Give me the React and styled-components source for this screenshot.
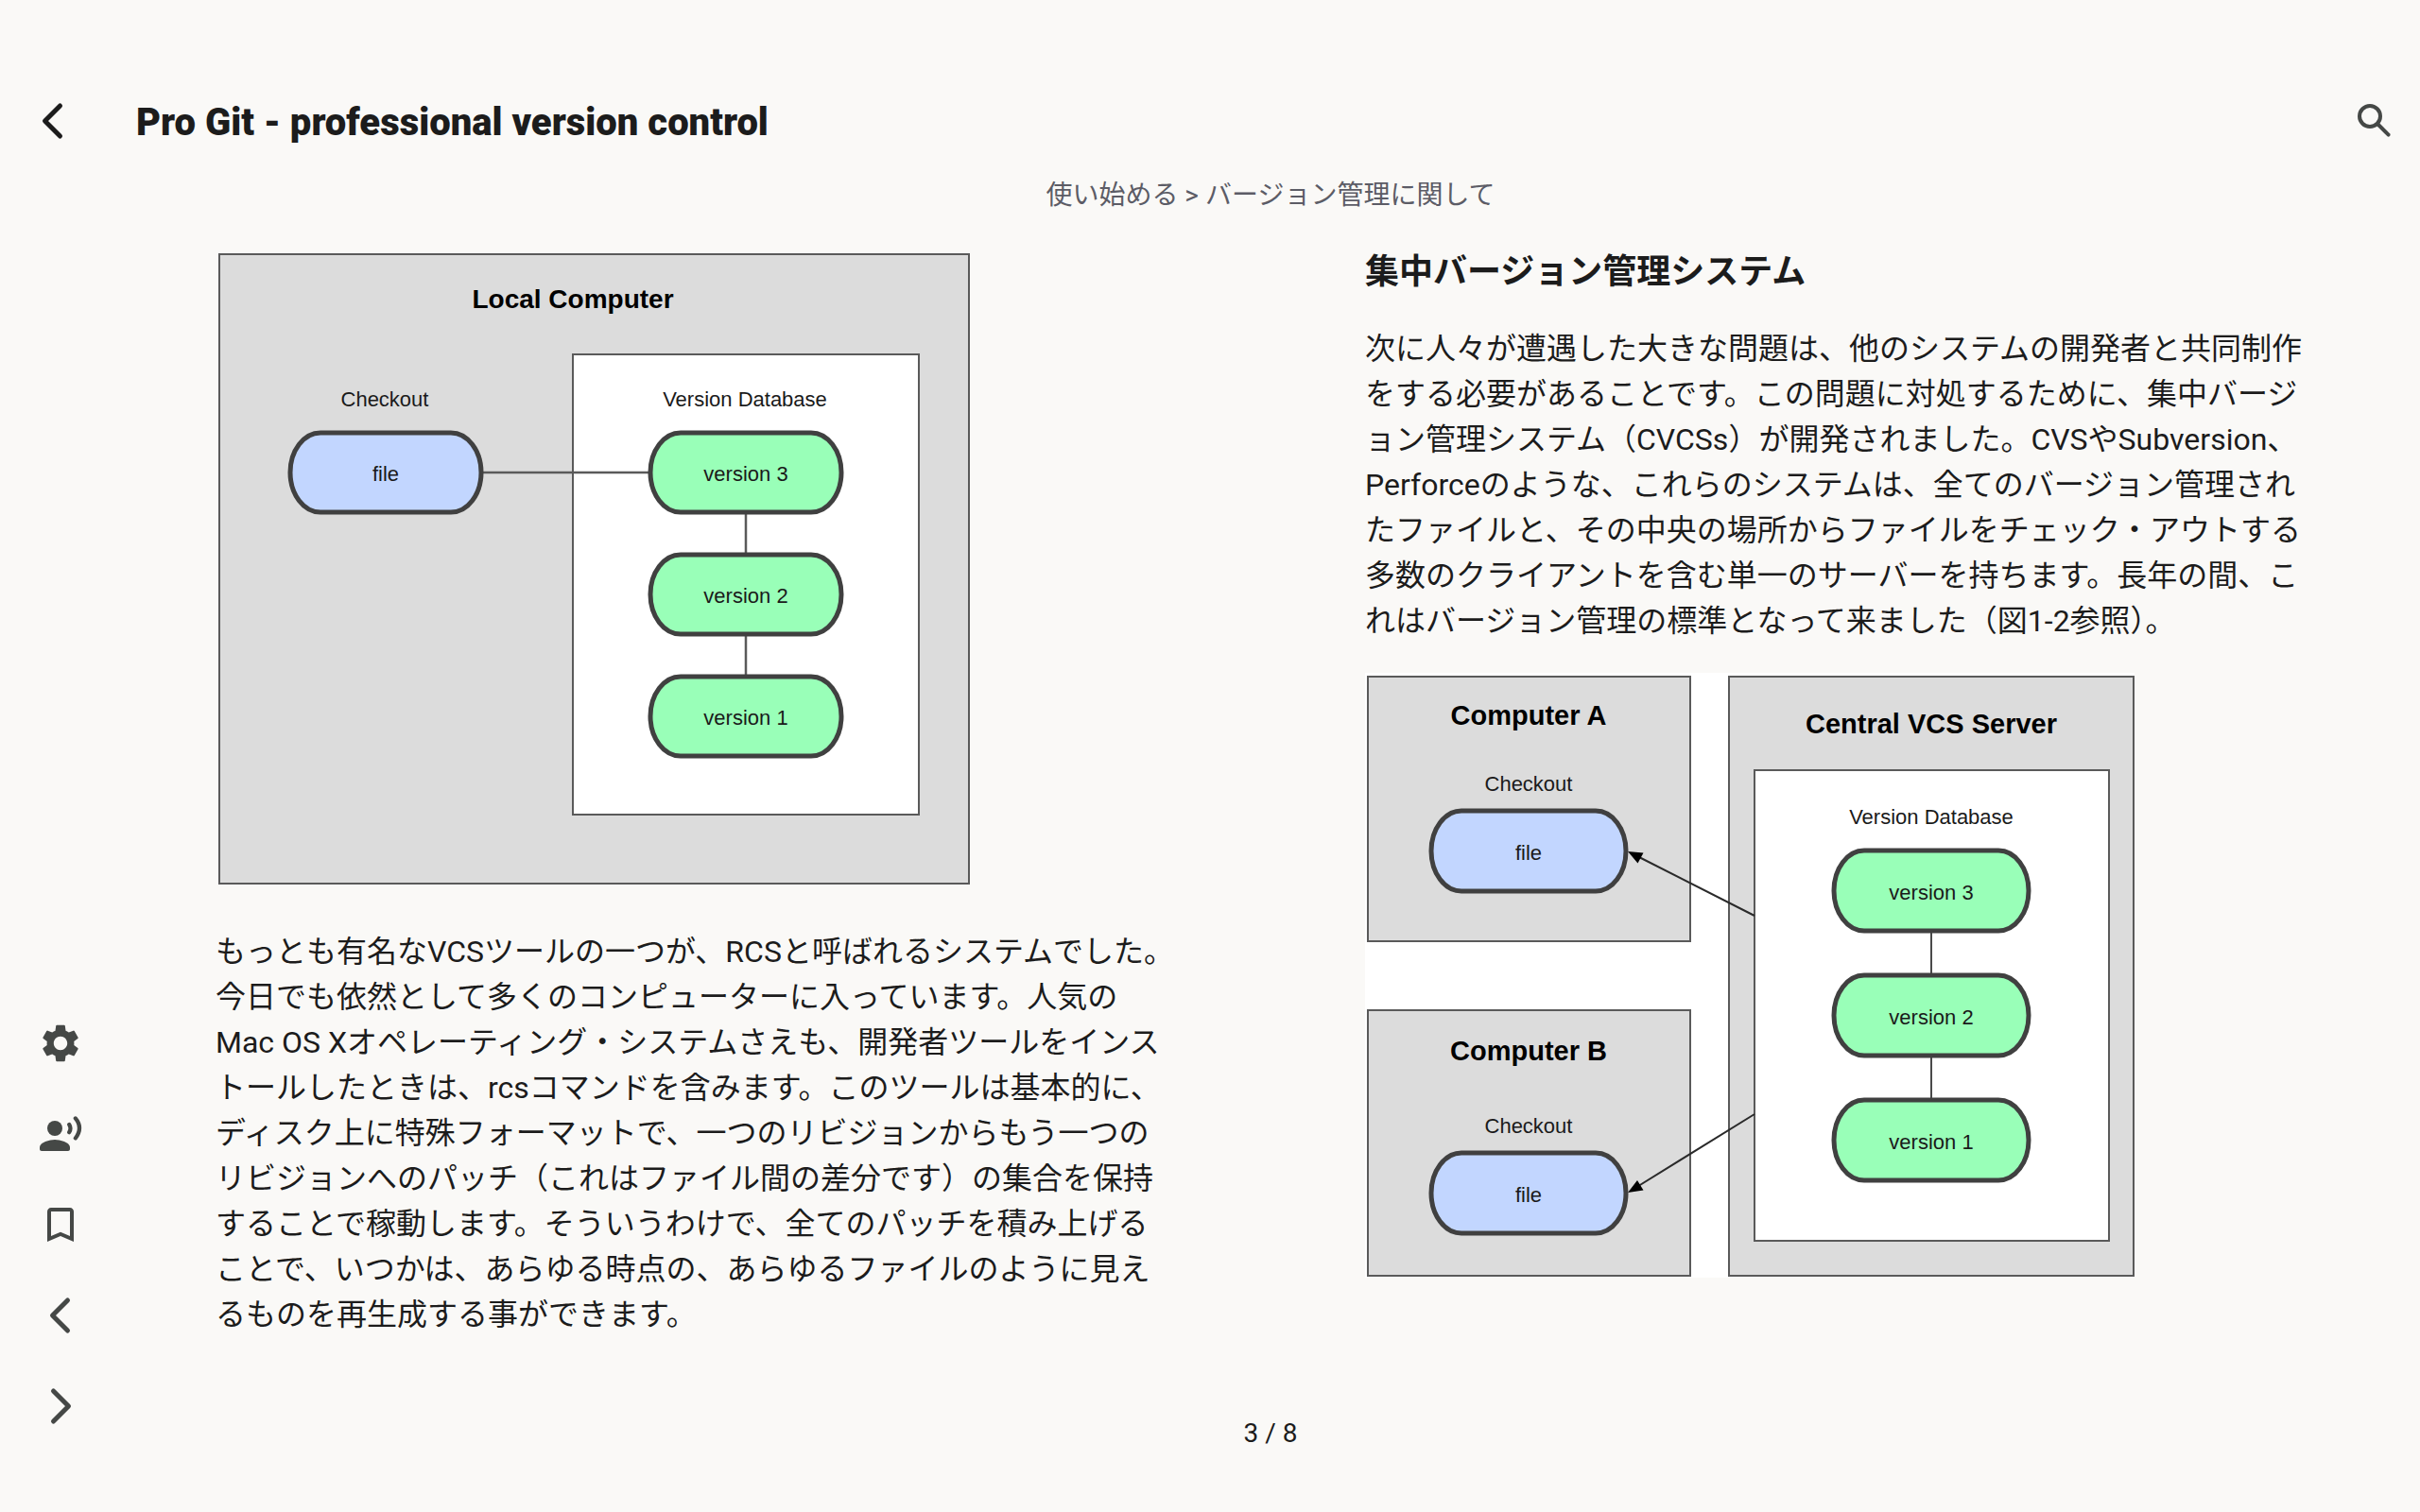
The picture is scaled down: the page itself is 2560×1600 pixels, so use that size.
import React from "react";
import styled, { createGlobalStyle } from "styled-components";
import { MdSettings, MdBookmarkBorder } from "react-icons/md";

const GlobalStyle = createGlobalStyle`
  *, *::before, *::after { box-sizing: border-box; }
  body {
    margin: 0;
    background: #faf9f7;
    color: #1c1c1c;
    font-family: Roboto, "Noto Sans CJK JP", sans-serif;
  }
`;

const Page = styled.div`
  min-height: 100vh;
  display: flex;
  flex-direction: column;
`;

const Header = styled.header`
  display: flex;
  align-items: center;
  gap: 40px;
  height: 96px;
  margin-top: 80px;
  padding: 0 16px 0 8px;
`;

const Title = styled.h1`
  flex: 1;
  margin: 0;
  padding-top: 4px;
  font-size: 40px;
  line-height: 48px;
  font-weight: 900;
`;

const IconButton = styled.button`
  display: flex;
  align-items: center;
  justify-content: center;
  width: ${(p) => (p.$compact ? 64 : 96)}px;
  height: 96px;
  padding: 0;
  border: 0;
  background: none;
  color: ${(p) => (p.$strong ? "#1c1c1c" : "#454846")};
  cursor: pointer;

  svg { width: 48px; height: 48px; display: block; }
`;

const Body = styled.div`
  flex: 1;
  display: flex;
`;

const SideBar = styled.nav`
  flex: 0 0 128px;
  display: flex;
  flex-direction: column;
  justify-content: flex-end;
  align-items: center;
  padding-bottom: 64px;
`;

const Reader = styled.main`
  flex: 1;
  min-width: 0;
  display: flex;
  flex-direction: column;
`;

const Crumb = styled.div`
  height: 90px;
  padding-top: 10px;
  text-align: center;
  font-size: 28px;
  line-height: 42px;
  color: #5c5c66;
`;

const Spread = styled.div`
  flex: 1;
  display: grid;
  grid-template-columns: 1fr 1fr;
`;

const Leaf = styled.article`
  padding: 0 100px;
`;

const Heading = styled.h2`
  margin: 0 0 35px;
  font-size: 36px;
  line-height: 44px;
  font-weight: 700;
`;

const Text = styled.p`
  margin: 0;
  font-size: 32px;
  line-height: 48px;
`;

const Figure = styled.figure`
  margin: ${(p) => (p.$spaced ? "31px 0 0" : "0 0 45px")};

  svg { display: block; max-width: 100%; }
  text {
    font-family: "Liberation Sans", Arial, sans-serif;
    font-size: 22px;
    text-anchor: middle;
    fill: #1a1a1a;
  }
`;

const Footer = styled.footer`
  height: 103px;
  text-align: center;
  font-size: 28px;
  line-height: 40px;
`;

const DiagramTitle = styled.text`
  && { font-size: ${(p) => p.$size}px; font-weight: 700; fill: #000; }
`;

function Chevron({ right }) {
  return (
    <svg viewBox="0 0 48 48" fill="none" stroke="currentColor" strokeWidth="5" strokeLinecap="round" strokeLinejoin="round" aria-hidden="true">
      <path d={right ? "M16.5 8 32.5 24 16.5 40" : "M31.5 8 15.5 24 31.5 40"} />
    </svg>
  );
}

function SearchIcon() {
  return (
    <svg viewBox="0 0 48 48" fill="none" stroke="currentColor" strokeWidth="4" aria-hidden="true">
      <circle cx="19" cy="19" r="11" />
      <path d="M27.5 27.5 38.6 38.6" strokeLinecap="round" />
    </svg>
  );
}

function VoiceIcon() {
  return (
    <svg viewBox="0 0 24 24" fill="currentColor" aria-hidden="true">
      <circle cx="9" cy="9" r="4" />
      <path d="M9 15c-2.67 0-8 1.34-8 4v1c0 .55.45 1 1 1h14c.55 0 1-.45 1-1v-1c0-2.66-5.33-4-8-4z" />
      <path d="M16.6 7q1.3 2 0 4.1M19.9 3.7q4.2 5 0 10.5" fill="none" stroke="currentColor" strokeWidth="2.1" strokeLinecap="round" />
    </svg>
  );
}

function Panel({ x, y, w, h, fill = "#dcdcdc" }) {
  return <rect x={x} y={y} width={w} height={h} fill={fill} stroke="#5a5a5a" strokeWidth="2" />;
}

function Pill({ x, y, w, h, fill, children }) {
  return (
    <g>
      <rect x={x} y={y} width={w} height={h} rx="32" ry={h / 2} fill={fill} stroke="#404040" strokeWidth="5" />
      <text x={x + w / 2} y={y + h / 2 + 9}>{children}</text>
    </g>
  );
}

const BLUE = "#c2d6ff";
const GREEN = "#99ffb8";

function LocalDiagram() {
  return (
    <svg width="800" height="672" viewBox="228 266 800 672" role="img" aria-label="Local Computer">
      <Panel x={232} y={269} w={793} h={666} />
      <Panel x={606} y={375} w={366} h={487} fill="#fff" />
      <path d="M508 500H689M789 542V588M789 670V717" stroke="#5a5a5a" strokeWidth="2.5" />
      <DiagramTitle $size={28} x="606" y="326">Local Computer</DiagramTitle>
      <text x="407" y="430">Checkout</text>
      <text x="788" y="430">Version Database</text>
      <Pill x={307} y={458} w={202} h={84} fill={BLUE}>file</Pill>
      <Pill x={688} y={458} w={202} h={84} fill={GREEN}>version 3</Pill>
      <Pill x={688} y={587} w={202} h={84} fill={GREEN}>version 2</Pill>
      <Pill x={688} y={716} w={202} h={84} fill={GREEN}>version 1</Pill>
    </svg>
  );
}

function CentralDiagram() {
  return (
    <svg width="814" height="640" viewBox="1444 712 814 640" role="img" aria-label="Central VCS Server">
      <rect x="1444" y="712" width="814" height="640" fill="#fff" />
      <Panel x={1447} y={716} w={341} h={280} />
      <Panel x={1447} y={1069} w={341} h={281} />
      <Panel x={1829} y={716} w={428} h={634} />
      <Panel x={1856} y={815} w={375} h={498} fill="#fff" />
      <path d="M2043 985V1031M2043 1117V1163" stroke="#4a4a4a" strokeWidth="2" />
      <path d="M1856 969 1730 905M1856 1179 1730 1257" stroke="#2a2a2a" strokeWidth="2" />
      <path d="M1722 901 1738.5 902.5 1732.5 913.5ZM1722 1262 1732 1249 1738.5 1259.5Z" fill="#000" />
      <DiagramTitle $size={29} x="1617" y="767">Computer A</DiagramTitle>
      <DiagramTitle $size={29} x="1617" y="1122">Computer B</DiagramTitle>
      <DiagramTitle $size={29} x="2043" y="776">Central VCS Server</DiagramTitle>
      <text x="1617" y="837">Checkout</text>
      <text x="1617" y="1199">Checkout</text>
      <text x="2043" y="872">Version Database</text>
      <Pill x={1514} y={858} w={206} h={85} fill={BLUE}>file</Pill>
      <Pill x={1514} y={1220} w={206} h={85} fill={BLUE}>file</Pill>
      <Pill x={1940} y={900} w={206} h={85} fill={GREEN}>version 3</Pill>
      <Pill x={1940} y={1032} w={206} h={85} fill={GREEN}>version 2</Pill>
      <Pill x={1940} y={1164} w={206} h={85} fill={GREEN}>version 1</Pill>
    </svg>
  );
}

export default function App() {
  return (
    <Page lang="ja">
      <GlobalStyle />
      <Header>
        <IconButton $strong aria-label="Back"><Chevron /></IconButton>
        <Title>Pro Git - professional version control</Title>
        <IconButton $compact aria-label="Search"><SearchIcon /></IconButton>
      </Header>
      <Body>
        <SideBar aria-label="Reader tools">
          <IconButton aria-label="Settings"><MdSettings /></IconButton>
          <IconButton aria-label="Read aloud"><VoiceIcon /></IconButton>
          <IconButton aria-label="Bookmark"><MdBookmarkBorder /></IconButton>
          <IconButton aria-label="Previous page"><Chevron /></IconButton>
          <IconButton aria-label="Next page"><Chevron right /></IconButton>
        </SideBar>
        <Reader>
          <Crumb>使い始める &gt; バージョン管理に関して</Crumb>
          <Spread>
            <Leaf>
              <Figure><LocalDiagram /></Figure>
              <Text>
                もっとも有名なVCSツールの一つが、RCSと呼ばれるシステムでした。今日でも依然として多くのコンピューターに入っています。人気のMac OS Xオペレーティング・システムさえも、開発者ツールをインストールしたときは、rcsコマンドを含みます。このツールは基本的に、ディスク上に特殊フォーマットで、一つのリビジョンからもう一つのリビジョンへのパッチ（これはファイル間の差分です）の集合を保持することで稼動します。そういうわけで、全てのパッチを積み上げることで、いつかは、あらゆる時点の、あらゆるファイルのように見えるものを再生成する事ができます。
              </Text>
            </Leaf>
            <Leaf>
              <Heading>集中バージョン管理システム</Heading>
              <Text>
                次に人々が遭遇した大きな問題は、他のシステムの開発者と共同制作をする必要があることです。この問題に対処するために、集中バージョン管理システム（CVCSs）が開発されました。CVSやSubversion、Perforceのような、これらのシステムは、全てのバージョン管理されたファイルと、その中央の場所からファイルをチェック・アウトする多数のクライアントを含む単一のサーバーを持ちます。長年の間、これはバージョン管理の標準となって来ました（図1-2参照）。
              </Text>
              <Figure $spaced><CentralDiagram /></Figure>
            </Leaf>
          </Spread>
          <Footer>3 / 8</Footer>
        </Reader>
      </Body>
    </Page>
  );
}
